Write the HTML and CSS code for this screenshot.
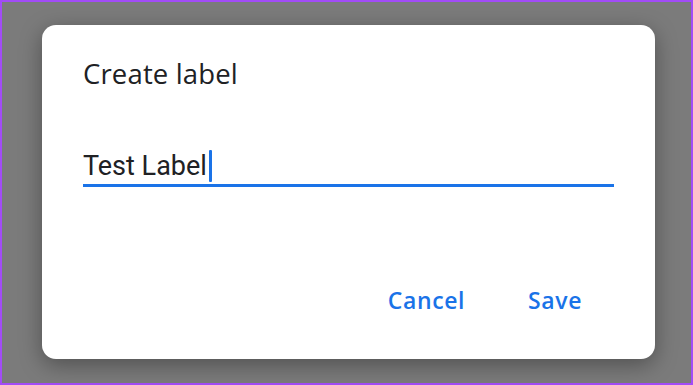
FILE: index.html
```html
<!DOCTYPE html>
<html>
<head>
<meta charset="utf-8">
<link rel="stylesheet" href="styles.css">
</head>
<body>
<div class="frame">
  <div class="dialog">
    <h1 class="title">Create label</h1>
    <div class="field">
      <span class="value">Test Label</span><span class="caret"></span>
    </div>
    <div class="actions">
      <button class="btn">Cancel</button>
      <button class="btn">Save</button>
    </div>
  </div>
</div>
</body>
</html>
```

FILE: styles.css
```css
html, body {
  margin: 0;
  padding: 0;
}
body {
  width: 693px;
  height: 385px;
  overflow: hidden;
}
.frame {
  box-sizing: border-box;
  width: 693px;
  height: 385px;
  border: 2px solid #a24cf7;
  background: #7b7b7b;
  padding: 23px 0 0 40px;
}
.dialog {
  box-sizing: border-box;
  width: 613px;
  height: 334px;
  background: #ffffff;
  border-radius: 14px;
  box-shadow: 0 6px 22px rgba(0, 0, 0, 0.35);
  padding: 32px 41px 0 41px;
  display: flex;
  flex-direction: column;
}
.title {
  margin: 0;
  font-family: "Open Sans", sans-serif;
  font-weight: 500;
  font-size: 27.5px;
  letter-spacing: 0.15px;
  line-height: 34px;
  color: #202124;
}
.field {
  margin-top: 59px;
  width: 531px;
  border-bottom: 3px solid #1a73e8;
  display: flex;
  align-items: flex-end;
  padding-bottom: 2px;
}
.value {
  font-family: Roboto, sans-serif;
  font-size: 27px;
  line-height: 32px;
  color: #202124;
}
.caret {
  display: inline-block;
  width: 3px;
  height: 32px;
  background: #1a73e8;
  margin-left: 2px;
  border-radius: 1px;
}
.actions {
  margin-top: auto;
  margin-bottom: 44px;
  display: flex;
  justify-content: flex-end;
  gap: 63px;
  padding-right: 32px;
}
.btn {
  border: none;
  background: none;
  padding: 0;
  font-family: "Open Sans", sans-serif;
  font-weight: 600;
  font-size: 23px;
  letter-spacing: 0.6px;
  line-height: 30px;
  color: #1a73e8;
}
```
